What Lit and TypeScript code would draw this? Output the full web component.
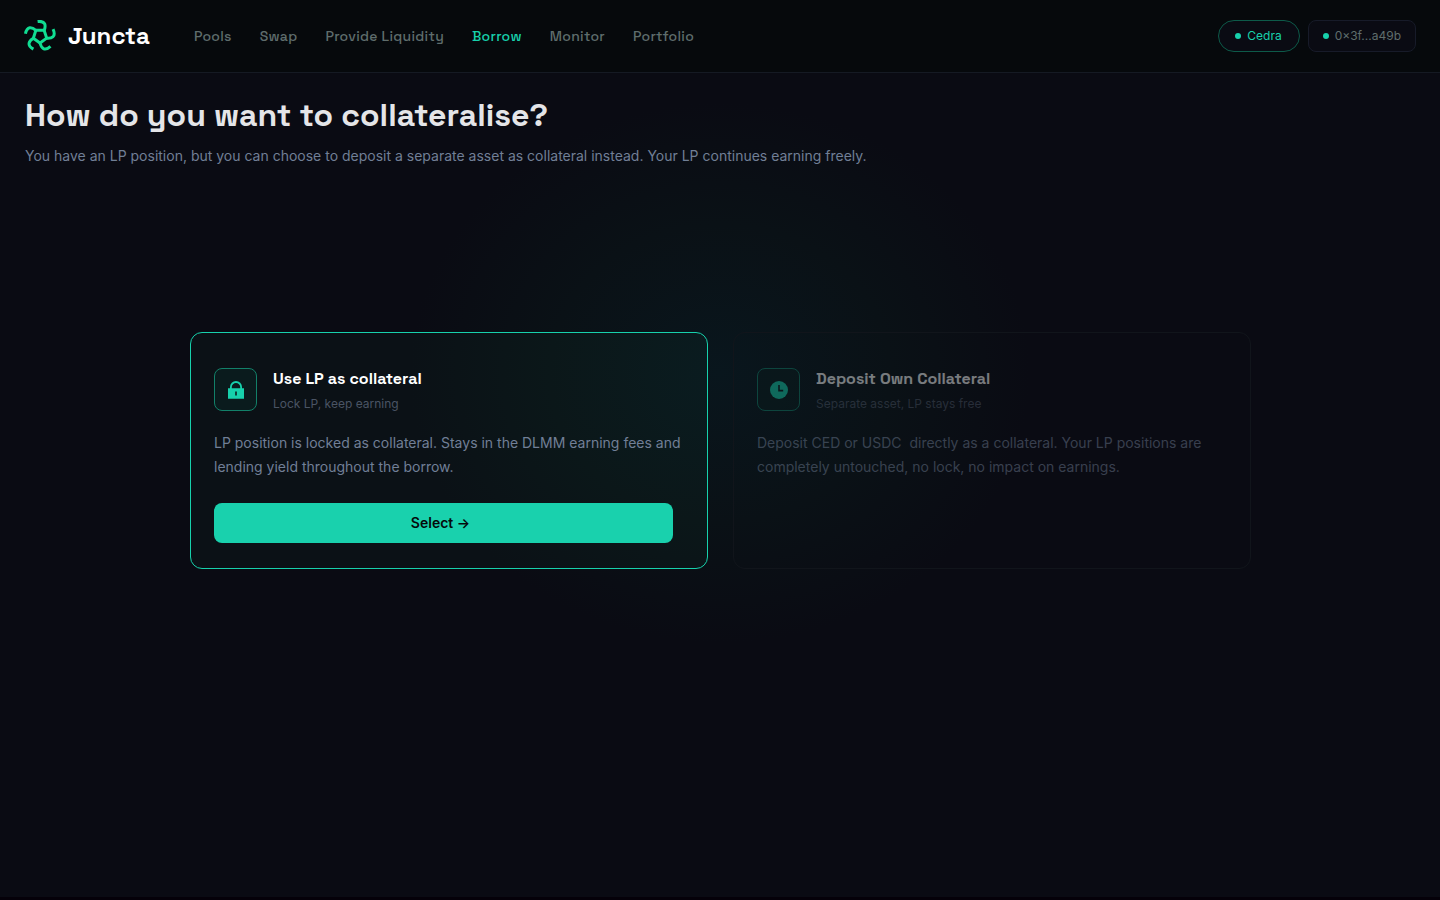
import { LitElement, html, css, svg } from "lit";
import { customElement } from "lit/decorators.js";
import { classMap } from "lit/directives/class-map.js";

const NAV = ["Pools", "Swap", "Provide Liquidity", "Borrow", "Monitor", "Portfolio"];
const ARMS = [0, 72, 144, 216, 288];

@customElement("app-root")
export class AppRoot extends LitElement {
  static styles = css`
    :host {
      display: flex;
      flex-direction: column;
      min-height: 100vh;
      box-sizing: border-box;
      border-bottom: 3px solid #050109;
      background: #0a0b13;
      color: #e4e5e8;
      font-family: Inter, sans-serif;
      font-size: 14px;
    }
    * {
      box-sizing: border-box;
    }
    h1, h2, p {
      margin: 0;
    }
    a {
      color: inherit;
      text-decoration: none;
    }
    button {
      font: inherit;
      cursor: pointer;
    }
    .display {
      font-family: "Space Grotesk", Inter, sans-serif;
    }
    .header {
      display: flex;
      align-items: center;
      height: 73px;
      padding: 0 24px;
      background: #06090c;
      border-bottom: 1px solid #151a23;
    }
    .brand {
      display: flex;
      align-items: center;
      gap: 12px;
      margin-right: 44px;
      color: #fff;
      font-size: 24px;
      font-weight: 600;
      line-height: 32px;
    }
    .logo {
      display: block;
      width: 32px;
      height: 32px;
    }
    .nav {
      display: flex;
      gap: 28px;
      color: #5f6d6c;
      font-weight: 500;
      letter-spacing: 0.02em;
    }
    .nav .active {
      color: #17d1ac;
    }
    .wallet {
      display: flex;
      gap: 8px;
      margin-left: auto;
    }
    .pill {
      display: flex;
      align-items: center;
      gap: 6px;
      height: 32px;
      padding: 0 14px 1px;
      border: 1px solid #171b29;
      border-radius: 8px;
      background: #0a0b13;
      color: #5f6d6c;
      font-size: 12px;
    }
    .pill.network {
      padding: 0 17px 1px 16px;
      border-color: #0d5a49;
      border-radius: 16px;
      color: #17d1ac;
    }
    .dot {
      width: 6px;
      height: 6px;
      border-radius: 50%;
      background: #17d1ac;
    }
    .main {
      flex: 1;
      padding: 23px 24px 24px 25px;
      background: radial-gradient(ellipse 310px 270px at 50% 300px, #09161d 0%, #0a1116 55%, #0a0b13 100%);
    }
    .title {
      font-size: 32px;
      font-weight: 600;
      line-height: 38px;
    }
    .lead {
      margin-top: 10px;
      color: #717f96;
      line-height: 24px;
    }
    .cards {
      display: grid;
      grid-template-columns: 1fr 1fr;
      gap: 25px;
      max-width: 1061px;
      margin: 164px auto 0;
    }
    .card {
      padding: 35px 23px 25px;
      border: 1px solid #11151b;
      border-radius: 12px;
    }
    .card.selected {
      border-color: #17d1ac;
      background: rgba(60, 200, 110, 0.035);
    }
    .card.muted .content {
      opacity: 0.45;
    }
    .head {
      display: flex;
      align-items: flex-start;
      gap: 16px;
    }
    .badge {
      display: grid;
      place-items: center;
      width: 43px;
      height: 43px;
      border: 1px solid #128069;
      border-radius: 8px;
      background: #0a1b1d;
    }
    .glyph {
      display: block;
      width: 20px;
      height: 20px;
    }
    .name {
      color: #fff;
      font-size: 16px;
      font-weight: 600;
      line-height: 22px;
    }
    .hint {
      margin-top: 7px;
      color: #4a5464;
      font-size: 12px;
      line-height: 14px;
    }
    .text {
      margin-top: 20px;
      color: #717f96;
      line-height: 24px;
    }
    .select {
      display: block;
      width: calc(100% - 11px);
      height: 40px;
      margin-top: 24px;
      padding: 0 6px 1px 0;
      border: 0;
      border-radius: 8px;
      background: #19d1ad;
      color: #050a0c;
      font-weight: 600;
    }
  `;

  private logo() {
    return html`<svg class="logo" viewBox="-16 -16 32 32" fill="none" stroke="#10dd92" stroke-width="3" stroke-linejoin="round" aria-hidden="true">
      ${ARMS.map(
        (a) => svg`<path transform="rotate(${a})" d="M-4.15 -5.66 L4.1 -5.7 C5.1 -8 5.5 -10.3 4.6 -12.3 C3.5 -14.4 1 -14.9 -2.4 -14.5"/>`
      )}
    </svg>`;
  }

  private lock() {
    return html`<svg class="glyph" viewBox="0 0 20 20" aria-hidden="true">
      <path d="M4.9 9V7.1a5.1 5.1 0 0 1 10.2 0v2" fill="none" stroke="#17d1ac" stroke-width="1.8" />
      <path fill="#17d1ac" fill-rule="evenodd" d="M2 8.3h16v10.4H2zM9.2 11.5v4h1.6v-4z" />
    </svg>`;
  }

  private clock() {
    return html`<svg class="glyph" viewBox="0 0 20 20" aria-hidden="true">
      <circle cx="10" cy="10" r="9" fill="#17d1ac" />
      <path d="M10 5v5.6h4.2" fill="none" stroke="#0a1b1d" stroke-width="1.6" />
    </svg>`;
  }

  render() {
    return html`
      <header class="header">
        <a class="brand display" href="#">${this.logo()}<span>Juncta</span></a>
        <nav class="nav display">
          ${NAV.map((n) => html`<a href="#" class=${classMap({ active: n === "Borrow" })}>${n}</a>`)}
        </nav>
        <div class="wallet">
          <button class="pill network"><span class="dot"></span>Cedra</button>
          <button class="pill"><span class="dot"></span>0×3f...a49b</button>
        </div>
      </header>
      <main class="main">
        <h1 class="title display">How do you want to collateralise?</h1>
        <p class="lead">You have an LP position, but you can choose to deposit a separate asset as collateral instead. Your LP continues earning freely.</p>
        <div class="cards">
          <section class="card selected">
            <div class="content">
              <div class="head">
                <span class="badge">${this.lock()}</span>
                <div>
                  <h2 class="name display">Use LP as collateral</h2>
                  <p class="hint">Lock LP, keep earning</p>
                </div>
              </div>
              <p class="text">LP position is locked as collateral. Stays in the DLMM earning fees and lending yield throughout the borrow.</p>
              <button class="select">Select →</button>
            </div>
          </section>
          <section class="card muted">
            <div class="content">
              <div class="head">
                <span class="badge">${this.clock()}</span>
                <div>
                  <h2 class="name display">Deposit Own Collateral</h2>
                  <p class="hint">Separate asset, LP stays free</p>
                </div>
              </div>
              <p class="text">Deposit CED or USDC&nbsp; directly as a collateral. Your LP positions are completely untouched, no lock, no impact on earnings.</p>
            </div>
          </section>
        </div>
      </main>
    `;
  }
}
